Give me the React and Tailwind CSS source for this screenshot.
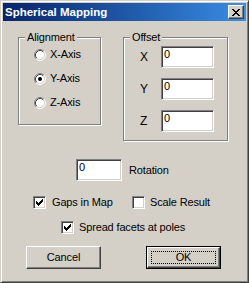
import React from 'react';

const raised =
  'border border-t-white border-l-white border-r-[#404040] border-b-[#404040] shadow-[inset_-1px_-1px_0_#808080]';
const sunken =
  'border border-t-[#808080] border-l-[#808080] border-r-white border-b-white shadow-[inset_1px_1px_0_#404040,inset_-1px_-1px_0_#d4d0c8]';
const etched = 'border border-[#808080] shadow-[inset_1px_1px_0_#fff,1px_1px_0_#fff]';

function Radio({ checked, label }) {
  return (
    <div className="flex items-center h-[13px]">
      <svg width="12" height="12" viewBox="0 0 12 12" className="shrink-0">
        <circle cx="6" cy="6" r="5" fill="#fff" />
        <path d="M2.11 9.89 A5.5 5.5 0 0 1 9.89 2.11" stroke="#808080" fill="none" />
        <path d="M9.89 2.11 A5.5 5.5 0 0 1 2.11 9.89" stroke="#fff" fill="none" />
        <path d="M2.82 9.18 A4.5 4.5 0 0 1 9.18 2.82" stroke="#404040" fill="none" />
        <path d="M9.18 2.82 A4.5 4.5 0 0 1 2.82 9.18" stroke="#d4d0c8" fill="none" />
        {checked && <circle cx="6" cy="6" r="2" fill="#000" />}
      </svg>
      <span className="ml-[4px] leading-[13px]">{label}</span>
    </div>
  );
}

function Check({ checked }) {
  return (
    <div className={`w-[13px] h-[13px] shrink-0 bg-white flex items-center justify-center ${sunken}`}>
      {checked && (
        <svg width="7" height="7" viewBox="0 0 7 7" shapeRendering="crispEdges">
          <rect x="0" y="2" width="1" height="3" fill="#000" />
          <rect x="1" y="3" width="1" height="3" fill="#000" />
          <rect x="2" y="4" width="1" height="3" fill="#000" />
          <rect x="3" y="3" width="1" height="3" fill="#000" />
          <rect x="4" y="2" width="1" height="3" fill="#000" />
          <rect x="5" y="1" width="1" height="3" fill="#000" />
          <rect x="6" y="0" width="1" height="3" fill="#000" />
        </svg>
      )}
    </div>
  );
}

function Field({ value, width }) {
  return (
    <div className={`h-[22px] bg-white pl-[2px] pt-[1px] leading-[13px] ${width} ${sunken}`}>
      {value}
    </div>
  );
}

export default function App() {
  return (
    <div className="w-[249px] h-[283px] bg-[#d4d0c8] border border-t-[#d4d0c8] border-l-[#d4d0c8] border-r-[#404040] border-b-[#404040] shadow-[inset_1px_1px_0_#fff,inset_-1px_-1px_0_#808080] p-[2px] flex flex-col font-['Liberation_Sans',Arial,sans-serif] text-[11px] tracking-[-0.15px] text-black">
      <div className="h-[18px] shrink-0 flex items-center justify-between pl-[2px] pr-[2px] bg-linear-to-r from-[#0a246a] to-[#3a8ee6]">
        <span className="text-white font-bold text-[11.5px] tracking-normal leading-[14px]">Spherical Mapping</span>
        <div className={`w-[16px] h-[14px] bg-[#d4d0c8] flex items-center justify-center ${raised}`}>
          <svg width="8" height="7" viewBox="0 0 8 7" shapeRendering="crispEdges">
            <path d="M0 0h2v1h-2zM6 0h2v1h-2zM1 1h2v1h-2zM5 1h2v1h-2zM2 2h4v1h-4zM3 3h2v1h-2zM2 4h4v1h-4zM1 5h2v1h-2zM5 5h2v1h-2zM0 6h2v1h-2zM6 6h2v1h-2z" fill="#000" />
          </svg>
        </div>
      </div>

      <div className="flex items-start mt-[10px] ml-[15px]">
        <fieldset className={`w-[83px] h-[94px] ${etched}`}>
          <legend className="ml-[6px] px-[2px] leading-[13px] bg-[#d4d0c8]">Alignment</legend>
          <div className="flex flex-col gap-[11px] mt-[4px] pl-[15px]">
            <Radio label="X-Axis" />
            <Radio label="Y-Axis" checked />
            <Radio label="Z-Axis" />
          </div>
        </fieldset>

        <fieldset className={`ml-[22px] w-[105px] h-[110px] ${etched}`}>
          <legend className="ml-[6px] px-[2px] leading-[13px] bg-[#d4d0c8]">Offset</legend>
          <div className="flex flex-col gap-[10px] mt-[2px] pl-[16px]">
            {['X', 'Y', 'Z'].map((axis) => (
              <div key={axis} className="flex items-center">
                <span className="w-[21px] text-[12px]">{axis}</span>
                <Field value="0" width="w-[53px]" />
              </div>
            ))}
          </div>
        </fieldset>
      </div>

      <div className="flex items-center mt-[18px] ml-[73px]">
        <Field value="0" width="w-[46px]" />
        <span className="ml-[7px]">Rotation</span>
      </div>

      <div className="flex items-center mt-[15px] ml-[30px]">
        <div className="flex items-center w-[99px]">
          <Check checked />
          <span className="ml-[6px] leading-[13px]">Gaps in Map</span>
        </div>
        <div className="flex items-center">
          <Check />
          <span className="ml-[5px] leading-[13px]">Scale Result</span>
        </div>
      </div>

      <div className="flex items-center mt-[12px] ml-[58px]">
        <Check checked />
        <span className="ml-[5px] leading-[13px]">Spread facets at poles</span>
      </div>

      <div className="flex mt-[12px] ml-[23px] gap-[45px]">
        <div className={`w-[75px] h-[23px] flex items-center justify-center ${raised}`}>Cancel</div>
        <div className="w-[75px] h-[23px] border border-black">
          <div className={`w-full h-full p-[3px] ${raised}`}>
            <div className="w-full h-full border border-dotted border-black flex items-center justify-center">
              OK
            </div>
          </div>
        </div>
      </div>
    </div>
  );
}
